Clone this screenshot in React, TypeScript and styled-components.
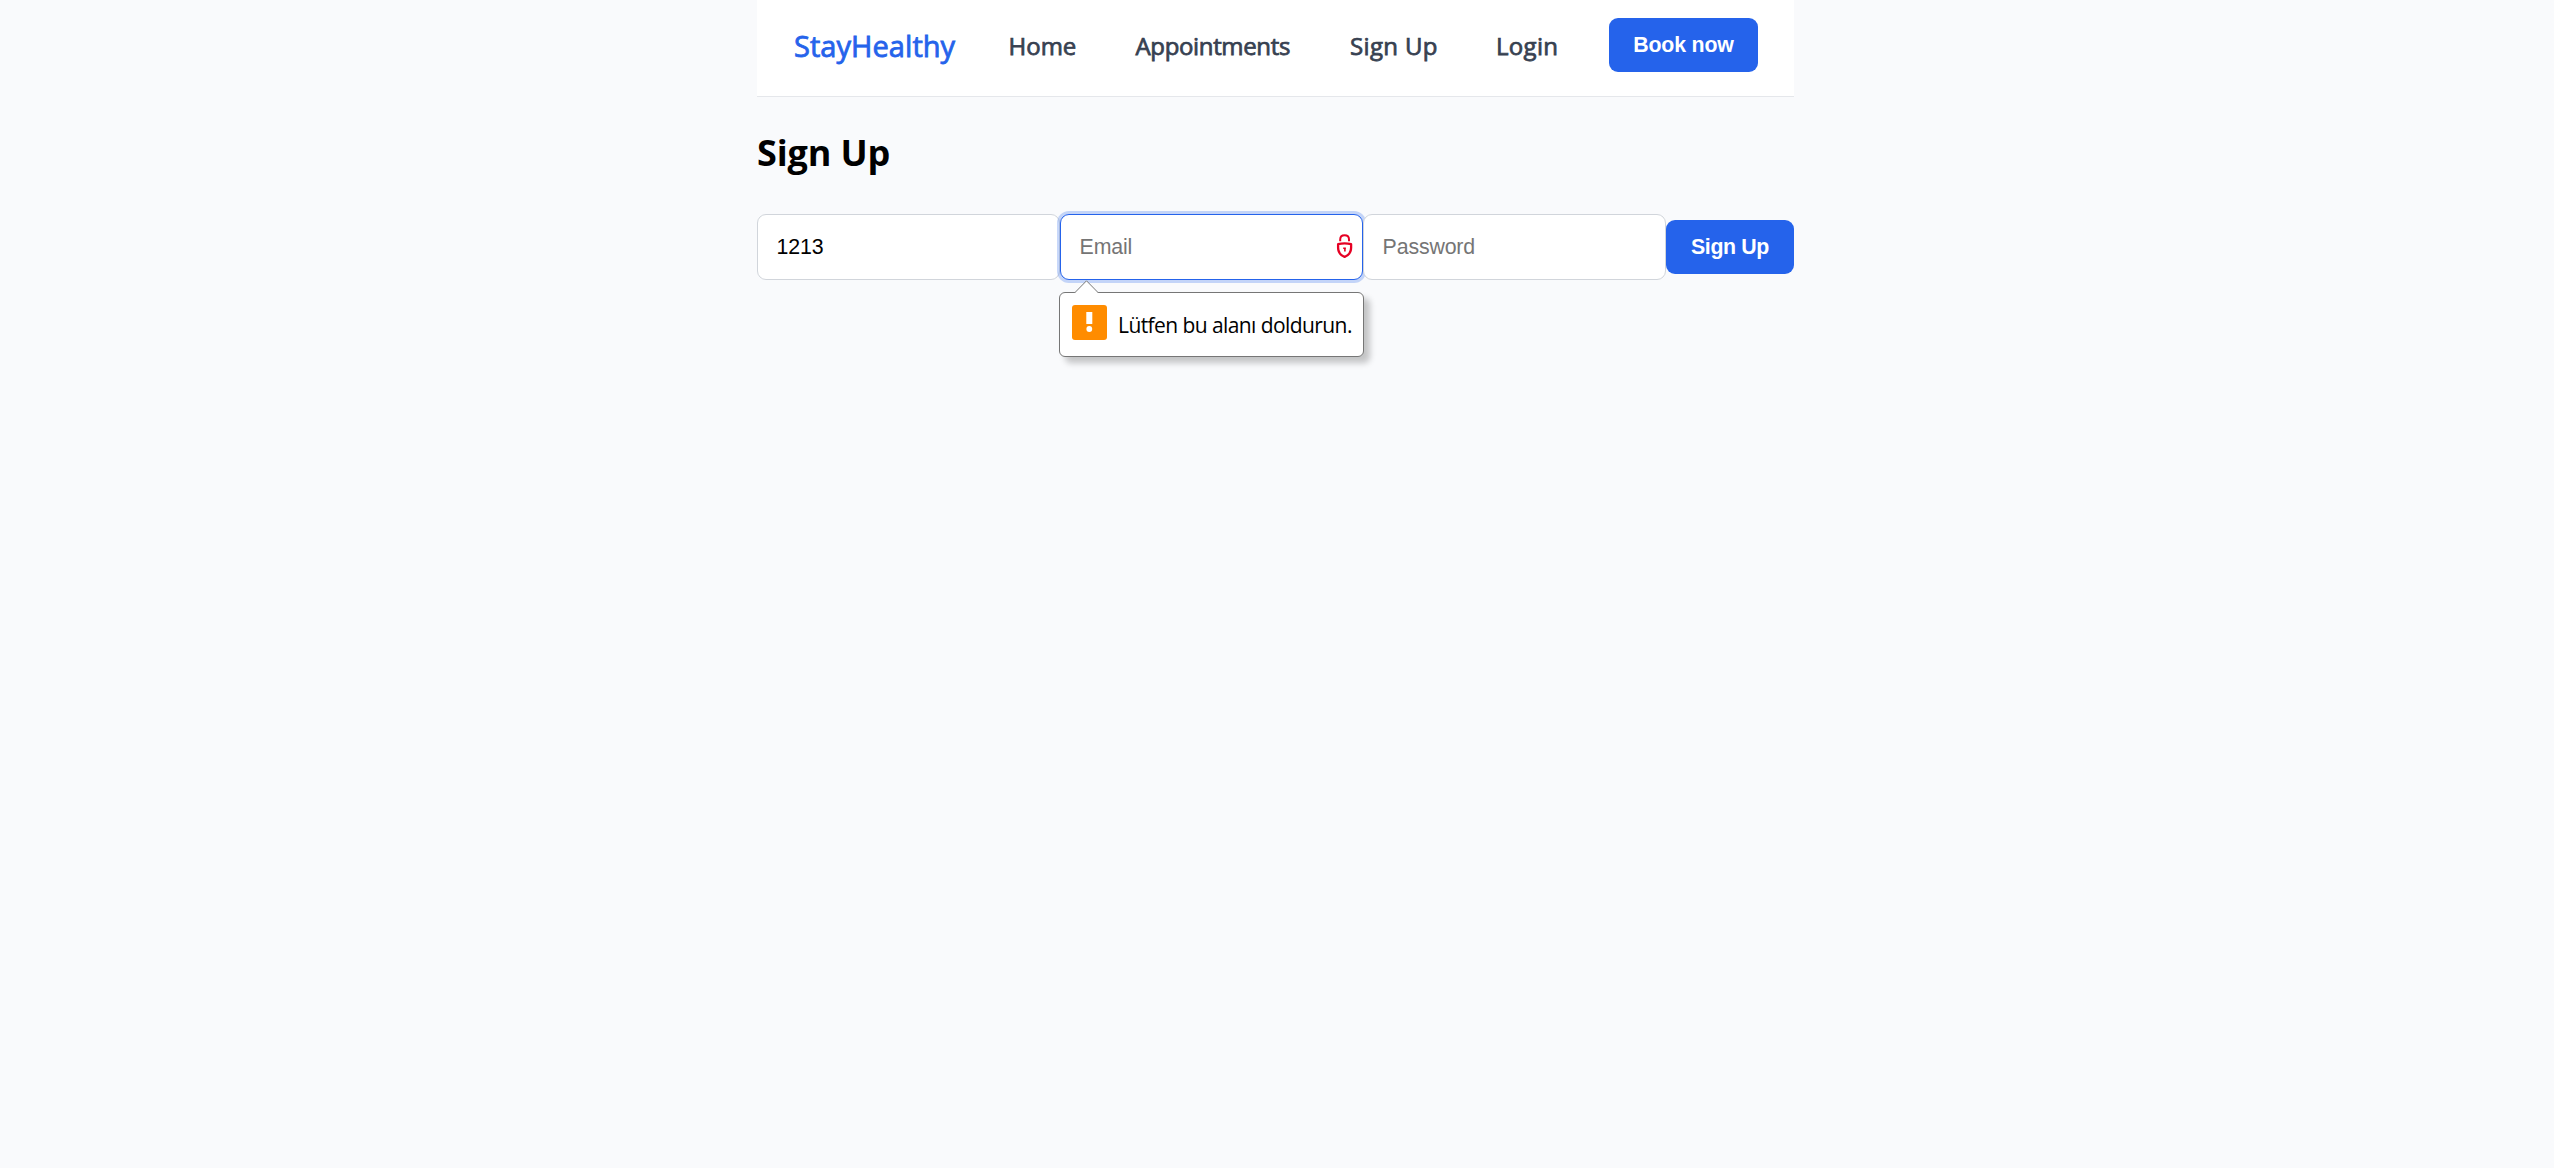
import React from "react";
import styled, { createGlobalStyle } from "styled-components";

const GlobalStyle = createGlobalStyle`
  * { box-sizing: border-box; }
  body {
    margin: 0;
    min-height: 100vh;
    background: #f9fafc;
    color: #000;
    font-family: "Open Sans", "Noto Sans", sans-serif;
  }
`;

const Page = styled.main`
  width: 1037px;
  margin-left: 757px;
`;

const Header = styled.header`
  display: grid;
  grid-template-columns: 214.5px 127px 214.5px 146px 113px auto;
  align-items: center;
  justify-content: start;
  height: 97px;
  padding: 0 0 5px 37px;
  background: #fff;
  border-bottom: 1px solid #e5e7eb;
`;

const Brand = styled.a`
  color: #2563eb;
  font-size: 29px;
  font-weight: 500;
  line-height: 40px;
  letter-spacing: 0.05px;
  -webkit-text-stroke: 0.8px currentColor;
`;

const NavLink = styled.a<{ $tracking?: number }>`
  color: #374151;
  font-size: 24px;
  font-weight: 500;
  line-height: 32px;
  white-space: nowrap;
  letter-spacing: ${(p) => p.$tracking ?? 0}px;
  -webkit-text-stroke: 0.75px currentColor;
`;

const Button = styled.button<{ $width: number; $tracking: number }>`
  width: ${(p) => p.$width}px;
  height: 54px;
  padding: 0;
  border: 0;
  border-radius: 9px;
  background: #2563eb;
  color: #fff;
  font: 700 21.33px "Liberation Sans", Arial, sans-serif;
  letter-spacing: ${(p) => p.$tracking}px;
  white-space: nowrap;
`;

const BookButton = styled(Button)`
  align-self: start;
  margin-top: 18px;
`;

const Title = styled.h1`
  margin: 29px 0 34px;
  font-size: 36px;
  font-weight: 700;
  line-height: 54px;
  letter-spacing: -0.15px;
`;

const Form = styled.form`
  display: flex;
  align-items: center;
`;

const Field = styled.div`
  position: relative;
  width: 303px;
`;

const Input = styled.input<{ $active?: boolean }>`
  display: block;
  width: 100%;
  height: 66px;
  padding: 0 18.6px;
  border: 1px solid ${(p) => (p.$active ? "#2563eb" : "#d1d5db")};
  border-radius: 9px;
  outline: none;
  background: #fff;
  box-shadow: ${(p) => (p.$active ? "0 0 0 3px rgba(37, 99, 235, 0.25)" : "none")};
  color: #000;
  font: 400 21.33px "Liberation Sans", Arial, sans-serif;
  letter-spacing: -0.15px;
  &::placeholder { color: #757575; opacity: 1; }
`;

const LockIcon = styled.svg`
  position: absolute;
  top: 19px;
  right: 9.5px;
  width: 18px;
  height: 26px;
`;

const Bubble = styled.div`
  position: absolute;
  z-index: 2;
  top: 78px;
  left: -1px;
  display: flex;
  align-items: flex-start;
  gap: 11px;
  width: 305px;
  height: 65px;
  padding: 12px;
  border: 1px solid #767676;
  border-radius: 6px;
  background: #fff;
  box-shadow: 6px 6px 6px rgba(0, 0, 0, 0.22);
`;

const BubbleArrow = styled.svg`
  position: absolute;
  top: -13px;
  left: 14px;
  width: 25px;
  height: 14px;
`;

const WarningIcon = styled.svg`
  flex: none;
  width: 35px;
  height: 35px;
`;

const BubbleText = styled.span`
  padding-top: 4px;
  font-size: 21px;
  line-height: 32px;
  letter-spacing: -0.58px;
  white-space: nowrap;
`;

export default function App() {
  return (
    <>
      <GlobalStyle />
      <Page>
        <Header>
          <Brand>StayHealthy</Brand>
          <NavLink>Home</NavLink>
          <NavLink $tracking={-0.35}>Appointments</NavLink>
          <NavLink $tracking={0.35}>Sign Up</NavLink>
          <NavLink $tracking={0.3}>Login</NavLink>
          <BookButton type="button" $width={149} $tracking={-0.2}>Book now</BookButton>
        </Header>
        <Title>Sign Up</Title>
        <Form noValidate>
          <Field>
            <Input type="text" defaultValue="1213" />
          </Field>
          <Field>
            <Input type="email" placeholder="Email" $active />
            <LockIcon viewBox="0 0 18 26" fill="none" stroke="#e60023" strokeWidth="2">
              <path d="M4.2 8.2V6.6C4.2 3.8 6 2.3 8.6 2.3s4.4 1.5 4.4 4.3v1.6" />
              <path d="M2.1 11.2Q8.6 9.4 15.1 11.2V14.8C15.1 19.6 12.2 22.5 8.6 23.9C5 22.5 2.1 19.6 2.1 14.8Z" strokeWidth="2.3" strokeLinejoin="round" />
              <path d="M7.2 15.2h2.7M8.9 14.4v4" strokeWidth="1.6" />
            </LockIcon>
            <Bubble role="alert">
              <BubbleArrow viewBox="0 0 25 14">
                <path d="M0.5 14L1 12.6L12.5 0.8L24 12.6L24.5 14Z" fill="#fff" />
                <path d="M0.5 13L12.5 0.8L24.5 13" fill="none" stroke="#767676" />
              </BubbleArrow>
              <WarningIcon viewBox="0 0 35 35">
                <rect width="35" height="35" rx="3" fill="#ff8c00" />
                <rect x="14.3" y="7" width="6" height="12" fill="#fff" />
                <circle cx="17.3" cy="24" r="2.9" fill="#fff" />
              </WarningIcon>
              <BubbleText>Lütfen bu alanı doldurun.</BubbleText>
            </Bubble>
          </Field>
          <Field>
            <Input type="password" placeholder="Password" />
          </Field>
          <Button type="button" $width={128} $tracking={-0.35}>Sign Up</Button>
        </Form>
      </Page>
    </>
  );
}
